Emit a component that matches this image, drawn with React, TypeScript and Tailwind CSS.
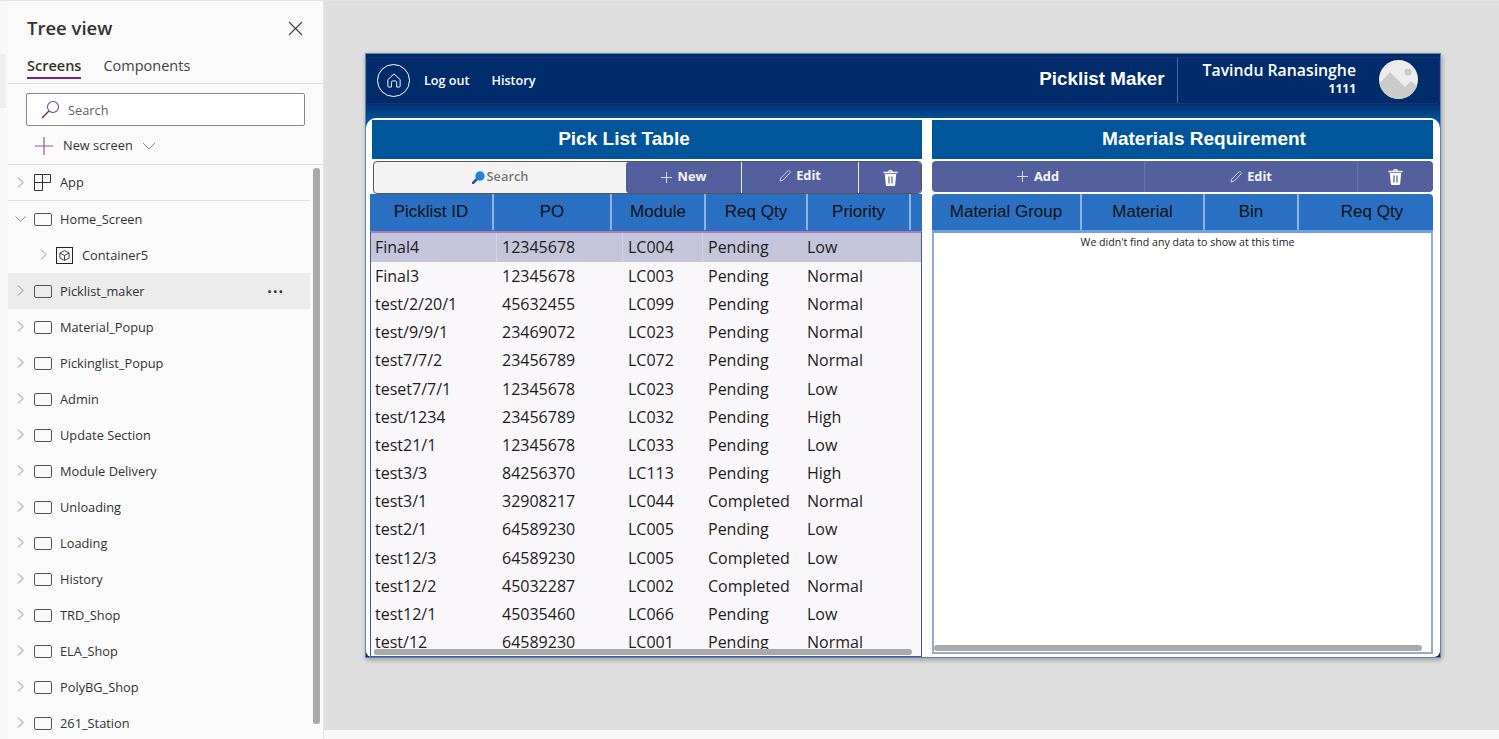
import React from "react";

const screens = ["Material_Popup","Pickinglist_Popup","Admin","Update Section","Module Delivery","Unloading","Loading","History","TRD_Shop","ELA_Shop","PolyBG_Shop","261_Station"];

const rows = [
  ["Final4","12345678","LC004","Pending","Low"],
  ["Final3","12345678","LC003","Pending","Normal"],
  ["test/2/20/1","45632455","LC099","Pending","Normal"],
  ["test/9/9/1","23469072","LC023","Pending","Normal"],
  ["test7/7/2","23456789","LC072","Pending","Normal"],
  ["teset7/7/1","12345678","LC023","Pending","Low"],
  ["test/1234","23456789","LC032","Pending","High"],
  ["test21/1","12345678","LC033","Pending","Low"],
  ["test3/3","84256370","LC113","Pending","High"],
  ["test3/1","32908217","LC044","Completed","Normal"],
  ["test2/1","64589230","LC005","Pending","Low"],
  ["test12/3","64589230","LC005","Completed","Low"],
  ["test12/2","45032287","LC002","Completed","Normal"],
  ["test12/1","45035460","LC066","Pending","Low"],
  ["test/12","64589230","LC001","Pending","Normal"],
];

function Chevron({ down = false, color = "#8a8886" }: { down?: boolean; color?: string }) {
  return (
    <svg width="12" height="12" viewBox="0 0 12 12" fill="none" stroke={color} strokeWidth="1">
      {down ? <path d="M0.5 3.5 L5.5 8.5 L10.5 3.5" /> : <path d="M3 0.5 L8 5.5 L3 10.5" />}
    </svg>
  );
}

function ScreenIcon() {
  return <span className="block h-[13px] w-[18px] rounded-[2px] border border-[#555]" />;
}

function AppIcon() {
  return (
    <svg width="17" height="17" viewBox="0 0 17 17" fill="none" stroke="#333" strokeWidth="1">
      <path d="M8.5 8.5 V0.5 H16.5 V8.5 H0.5 V16.5 H8.5 V8.5 M0.5 8.5 V0.5 H8.5" />
    </svg>
  );
}

function BoxIcon() {
  return (
    <span className="flex h-[17px] w-[17px] items-center justify-center border border-[#222]">
      <svg width="11" height="11" viewBox="0 0 12 12" fill="none" stroke="#333" strokeWidth="1">
        <path d="M6 0.7 L11 3.3 V8.8 L6 11.3 L1 8.8 V3.3 Z M1 3.3 L6 6 L11 3.3 M6 6 V11.3" />
      </svg>
    </span>
  );
}

function TreeRow({ label, selected = false, open = false, more = false }: { label: string; selected?: boolean; open?: boolean; more?: boolean }) {
  return (
    <div className={`flex h-9 w-[302px] shrink-0 items-center pl-[7px] ${selected ? "bg-[#ececec]" : ""}`}>
      <span className="flex w-[19px]"><Chevron down={open} /></span>
      <ScreenIcon />
      <span className="ml-[8px] pt-[1px] text-[12.8px] text-[#333]">{label}</span>
      {more && <span className="ml-auto mr-[26px] mb-2 text-[16px] font-bold leading-none tracking-[1px] text-[#333]">...</span>}
    </div>
  );
}

function Sidebar() {
  return (
    <aside className="relative flex h-full w-[316px] shrink-0 flex-col overflow-hidden border-r border-[#e4e4e4] bg-[#fafafa] font-['Open_Sans',sans-serif]">
      <div className="flex h-[54px] shrink-0 items-center justify-between pl-[19px] pr-[20px]">
        <span className="text-[18.5px] font-semibold text-[#333]">Tree view</span>
        <svg width="15" height="15" viewBox="0 0 15 15" stroke="#444" strokeWidth="1.1"><path d="M1 1 L14 14 M14 1 L1 14" /></svg>
      </div>
      <div className="flex h-[29px] shrink-0 border-b border-[#e2e2e2] pl-[19px] text-[14.5px] text-[#444]">
        <span className="h-[24px] border-b-2 border-[#742774] font-semibold leading-[22px] text-[#333]">Screens</span>
        <span className="ml-[22px] leading-[22px]">Components</span>
      </div>
      <div className="ml-[18px] mt-[9px] flex h-[33px] w-[279px] shrink-0 items-center rounded-[2px] border border-[#8a8886] bg-white pl-[14px]">
        <svg width="19" height="19" viewBox="0 0 19 19" fill="none">
          <circle cx="12" cy="7" r="5.5" stroke="#7c3f8c" strokeWidth="1.1" />
          <path d="M8 11 L1 18" stroke="#742774" strokeWidth="1.4" />
        </svg>
        <span className="ml-[8px] pt-[2px] text-[12.8px] text-[#605e5c]">Search</span>
      </div>
      <div className="flex h-[39px] shrink-0 items-center border-b border-[#e2e2e2] pl-[27px] pt-[2px]">
        <svg width="18" height="18" viewBox="0 0 18 18" stroke="#8f5a9a" strokeWidth="1.2"><path d="M9 0 V18 M0 9 H18" /></svg>
        <span className="ml-[10px] text-[12.8px] text-[#333]">New screen</span>
        <span className="ml-[9px] flex"><svg width="14" height="8" viewBox="0 0 14 8" fill="none" stroke="#8a8886"><path d="M1 1 L7 7 L13 1" /></svg></span>
      </div>
      <div className="flex h-[36px] w-[302px] shrink-0 items-center border-b border-[#e2e2e2] pl-[7px]">
        <span className="flex w-[19px]"><Chevron /></span>
        <AppIcon />
        <span className="ml-[9px] pt-[1px] text-[12.8px] text-[#333]">App</span>
      </div>
      <TreeRow label="Home_Screen" open />
      <div className="flex h-9 w-[302px] shrink-0 items-center pl-[30px]">
        <span className="flex w-[18px]"><Chevron color="#a08a96" /></span>
        <BoxIcon />
        <span className="ml-[9px] pt-[1px] text-[12.8px] text-[#333]">Container5</span>
      </div>
      <TreeRow label="Picklist_maker" selected more />
      {screens.map((s) => <TreeRow key={s} label={s} />)}
      <div className="absolute left-[305px] top-[167px] h-[556px] w-[7px] rounded-[3px] bg-[#aaaaaa]" />
    </aside>
  );
}

function Trash() {
  return (
    <svg width="15" height="16" viewBox="0 0 15 16" fill="white">
      <path d="M5.2 1.8 C5.2 0.6 6 0 7.5 0 C9 0 9.8 0.6 9.8 1.8 H14.5 V3.2 H0.5 V1.8 Z M6.4 1.8 H8.6 C8.6 1.3 8.2 1.1 7.5 1.1 C6.8 1.1 6.4 1.3 6.4 1.8 Z" />
      <path fillRule="evenodd" d="M1.8 4 H13.2 L12.2 14.5 C12.1 15.4 11.5 16 10.6 16 H4.4 C3.5 16 2.9 15.4 2.8 14.5 Z M5.4 6.5 V13.5 H6.6 V6.5 Z M8.4 6.5 V13.5 H9.6 V6.5 Z" />
    </svg>
  );
}

function Pencil() {
  return (
    <svg width="12" height="12" viewBox="0 0 12 12" fill="none" stroke="#d9dbe8" strokeWidth="0.9">
      <path d="M1 11 L1.8 8 L8.8 1 C9.4 0.5 10.2 0.5 10.8 1.1 C11.4 1.7 11.4 2.5 10.9 3.1 L4 10.2 Z" />
    </svg>
  );
}

function Plus() {
  return (
    <svg width="11" height="11" viewBox="0 0 11 11" stroke="#e4e5f0" strokeWidth="0.9"><path d="M5.5 0 V11 M0 5.5 H11" /></svg>
  );
}

function ActionLabel({ kind, children }: { kind: "plus" | "pencil"; children: React.ReactNode }) {
  return (
    <span className={`flex items-center font-['Open_Sans',sans-serif] text-[12.8px] font-bold text-[#f4f4fa] ${kind === "plus" ? "gap-[6px]" : "gap-[5px]"}`}>
      {kind === "plus" ? <Plus /> : <Pencil />}
      {children}
    </span>
  );
}

function Title({ shift, children }: { shift: string; children: React.ReactNode }) {
  return (
    <div className={`flex h-[39px] items-center justify-center bg-[#00559b] pb-[1px] font-['Liberation_Sans',sans-serif] text-[19px] font-bold text-white ${shift}`}>
      {children}
    </div>
  );
}

function HeaderCell({ w, children, last = false }: { w: string; children?: React.ReactNode; last?: boolean }) {
  return (
    <div className={`flex h-full items-center justify-center ${w} ${last ? "" : "border-r-2 border-[#8fb2de]"}`}>{children}</div>
  );
}

function LeftTable() {
  return (
    <div className="flex w-[552px] shrink-0 flex-col">
      <div className="ml-[2px]"><Title shift="pr-[46px]">Pick List Table</Title></div>
      <div className="ml-[3px] mt-[2px] flex h-[33px] w-[549px] overflow-hidden rounded-[4px] border border-[#555] bg-[#f4f4f4]">
        <div className="flex w-[252px] items-center justify-center gap-[2px] pb-[1px] font-['Open_Sans',sans-serif] text-[12.8px] font-semibold text-[#777]">
          <svg width="13" height="13" viewBox="0 0 13 13">
            <path d="M4.5 8.5 L1 12" stroke="#4a4a9a" strokeWidth="2.6" strokeLinecap="round" />
            <circle cx="8" cy="5" r="4.7" fill="#1a86dc" />
          </svg>
          Search
        </div>
        <div className="flex w-[116px] items-center justify-center rounded-l-[3px] border-r border-[#e6e7f0] bg-[#54609e] pb-[1px]"><ActionLabel kind="plus">New</ActionLabel></div>
        <div className="flex w-[117px] items-center justify-center border-r border-[#e6e7f0] bg-[#54609e] pb-[3px]"><ActionLabel kind="pencil">Edit</ActionLabel></div>
        <div className="flex flex-1 items-center justify-center bg-[#54609e]"><Trash /></div>
      </div>
      <div className="flex h-[37px] bg-[#2a70c2] pb-[1px] font-['Liberation_Sans',sans-serif] text-[17px] text-[#111]">
        <HeaderCell w="w-[124px]">Picklist ID</HeaderCell>
        <HeaderCell w="w-[118px]">PO</HeaderCell>
        <HeaderCell w="w-[94px]">Module</HeaderCell>
        <HeaderCell w="w-[102px]">Req Qty</HeaderCell>
        <HeaderCell w="w-[103px]">Priority</HeaderCell>
        <HeaderCell w="flex-1" last />
      </div>
      <div className="relative flex h-[426px] flex-col overflow-hidden border-x border-b border-t-2 border-[#3b5c90] border-t-[#b07ab0] bg-[#faf7fb] font-['Open_Sans',sans-serif] text-[16px] text-[#1c1c1c]">
        {rows.map((r, i) => (
          <div key={r[0]} className={`grid shrink-0 grid-cols-[126px_126px_80px_99px_1fr] items-center ${i === 0 ? "h-[28.8px] bg-[#c4c5da]" : "h-[28.2px]"}`}>
            {r.map((c, j) => (
              <span key={j} className={`h-full whitespace-nowrap leading-[28px] ${j === 0 ? "pl-[4px]" : "pl-[5px]"} ${i === 0 && j < 3 ? "border-r border-[#d4d5e4]" : ""}`}>{c}</span>
            ))}
          </div>
        ))}
        <div className="absolute bottom-[1px] left-[3px] h-[6px] w-[538px] rounded-[3px] bg-[#aaaaaa]" />
      </div>
    </div>
  );
}

function RightTable() {
  return (
    <div className="flex w-[501px] shrink-0 flex-col">
      <Title shift="pl-[43px]">Materials Requirement</Title>
      <div className="mt-[2px] flex h-[31px] overflow-hidden rounded-[4px] bg-[#54609e]">
        <div className="flex w-[213px] items-center justify-center border-r border-[#6a75ad]"><ActionLabel kind="plus">Add</ActionLabel></div>
        <div className="flex w-[213px] items-center justify-center border-r border-[#6a75ad]"><ActionLabel kind="pencil">Edit</ActionLabel></div>
        <div className="flex flex-1 items-center justify-center"><Trash /></div>
      </div>
      <div className="mt-[2px] flex h-[36px] rounded-t-[4px] bg-[#2a70c2] font-['Liberation_Sans',sans-serif] text-[17px] text-[#111]">
        <HeaderCell w="w-[150px]">Material Group</HeaderCell>
        <HeaderCell w="w-[123px]">Material</HeaderCell>
        <HeaderCell w="w-[94px]">Bin</HeaderCell>
        <div className="flex h-full flex-1 items-center justify-center pl-[12px]">Req Qty</div>
      </div>
      <div className="relative h-[424px] border-x-2 border-b-2 border-t-[3px] border-x-[#94abcb] border-b-[#94abcb] border-t-[#6fa0e0] bg-white pl-[10px] pt-[2px] text-center font-['Open_Sans',sans-serif] text-[10.6px] leading-[15px] text-[#222]">
        We didn&apos;t find any data to show at this time
        <div className="absolute bottom-[1px] left-[0px] h-[6px] w-[488px] rounded-[3px] bg-[#aaaaaa]" />
      </div>
    </div>
  );
}

function AppFrame() {
  return (
    <div className="flex h-[605px] w-[1076px] flex-col overflow-hidden border border-[#5f86b0] bg-[linear-gradient(180deg,#002d6b_0%,#002d6b_8%,#00559b_11%,#002d6b_100%)] shadow-[1px_2px_5px_rgba(0,0,0,0.3)]">
      <header className="mt-[3px] flex h-[47px] shrink-0 items-center rounded-[4px] border border-[#2a2a70] bg-[#002c6c] pl-[10px] text-white">
        <span className="flex h-[33px] w-[33px] items-center justify-center rounded-full border-[1.5px] border-white">
          <svg width="14" height="15" viewBox="0 0 16 17" fill="none" stroke="white" strokeWidth="1.1">
            <path d="M1 7.5 L8 1 L15 7.5 V15 C15 15.6 14.6 16 14 16 H11 V10.5 C11 9.5 10.3 9 9.5 9 H6.5 C5.7 9 5 9.5 5 10.5 V16 H2 C1.4 16 1 15.6 1 15 Z" />
          </svg>
        </span>
        <span className="ml-[14px] pt-[2px] font-['Open_Sans',sans-serif] text-[12.6px] font-semibold">Log out</span>
        <span className="ml-[22px] pt-[2px] font-['Open_Sans',sans-serif] text-[12.6px] font-semibold">History</span>
        <span className="ml-auto pb-[2px] font-['Liberation_Sans',sans-serif] text-[18.8px] font-bold">Picklist Maker</span>
        <div className="ml-[12px] flex h-full items-center border-l border-[#4a6a9a]">
          <div className="ml-[25px] flex flex-col items-end pb-[3px] font-['Open_Sans',sans-serif] leading-none">
            <span className="text-[15.8px] font-semibold leading-[19px]">Tavindu Ranasinghe</span>
            <span className="text-[12px] font-bold leading-[18px]">1111</span>
          </div>
          <svg className="mb-[2px] ml-[23px] mr-[21px]" width="39" height="39" viewBox="0 0 39 39">
            <clipPath id="av"><circle cx="19.5" cy="19.5" r="19.5" /></clipPath>
            <g clipPath="url(#av)">
              <rect width="39" height="39" fill="#ececec" />
              <path d="M0 24 L11 12 L26 27 L32 21 L39 27 V39 H0 Z" fill="#cbcbc9" />
              <circle cx="29" cy="12" r="3.5" fill="#cbcbc9" />
            </g>
          </svg>
        </div>
      </header>
      <div className="mt-[14px] flex flex-1 gap-[10px] rounded-t-[10px] rounded-b-[6px] bg-white pl-[4px] pt-[2px]">
        <LeftTable />
        <RightTable />
      </div>
    </div>
  );
}

export default function App() {
  return (
    <div className="flex h-[739px] w-[1499px] overflow-hidden border-t border-[#e4e4e4] bg-[#f8f8f8]">
      <div className="w-[8px] shrink-0 pt-[53px]"><div className="h-[54px] w-[6px] bg-[#eeeeee]" /></div>
      <Sidebar />
      <main className="flex min-w-0 flex-1 flex-col">
        <div className="h-[729px] bg-[#dfdfdf] pl-[41px] pt-[52px]">
          <AppFrame />
        </div>
      </main>
    </div>
  );
}
